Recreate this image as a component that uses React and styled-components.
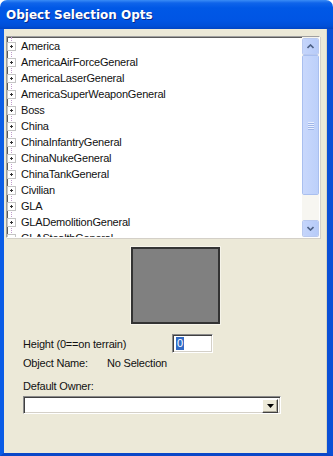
import React from "react";
import styled, { createGlobalStyle } from "styled-components";

const Global = createGlobalStyle`
  html, body { margin: 0; padding: 0; background: #fff; }
  body { width: 333px; height: 456px; overflow: hidden; }
`;

const Window = styled.div`
  width: 333px;
  height: 456px;
  display: flex;
  flex-direction: column;
  font-family: "Liberation Sans", Arial, sans-serif;
  font-size: 11px;
  letter-spacing: -0.2px;
  color: #111;
`;

const TitleBar = styled.div`
  height: 29px;
  flex: none;
  display: flex;
  align-items: center;
  padding-left: 6px;
  border-radius: 7px 7px 0 0;
  background: linear-gradient(
    to bottom,
    #3a8cf6 0px,
    #0f64ea 3px,
    #0058e6 8px,
    #0055e4 20px,
    #004fd8 26px,
    #0044c4 29px
  );
`;

const Title = styled.span`
  font-family: "DejaVu Sans", Verdana, sans-serif;
  font-weight: bold;
  font-size: 12px;
  letter-spacing: 0;
  color: #fff;
  text-shadow: 1px 1px 0 #0a2a8a;
`;

const Frame = styled.div`
  flex: 1;
  display: flex;
  flex-direction: column;
  background: #ece9d8;
  border-left: 4px solid #0a5ce6;
  border-right: 6px solid #0a4fd6;
  border-bottom: 3px solid #0a47c8;
  box-shadow: inset -1px 0 0 #d8d4c4;
`;

const TreeBox = styled.div`
  margin: 7px 0 0 2px;
  width: 314px;
  height: 202px;
  box-sizing: border-box;
  display: flex;
  background: #fff;
  border-top: 1px solid #a0a0a0;
  border-left: 1px solid #a0a0a0;
  border-right: 1px solid #ffffff;
  border-bottom: 1px solid #ffffff;
  box-shadow: inset 1px 1px 0 #5a5a5a, 1px 1px 0 #d4d0c8;
`;

const TreeList = styled.div`
  flex: 1;
  position: relative;
  overflow: hidden;
  padding-top: 1px;
`;

const DotLine = styled.div`
  position: absolute;
  left: 4px;
  top: 0;
  bottom: 0;
  border-left: 1px dotted #c09ccc;
`;

const TreeRow = styled.div`
  height: 16px;
  display: flex;
  align-items: center;
  position: relative;
`;

const Plus = styled.span`
  width: 9px;
  height: 9px;
  box-sizing: border-box;
  border: 1px solid #c4c4c4;
  background: #fff;
  position: relative;
  flex: none;
  &::before {
    content: "";
    position: absolute;
    left: 2px;
    top: 3px;
    width: 3px;
    height: 1px;
    background: #333;
  }
  &::after {
    content: "";
    position: absolute;
    left: 3px;
    top: 2px;
    width: 1px;
    height: 3px;
    background: #333;
  }
`;

const TreeLabel = styled.span`
  margin-left: 5px;
  white-space: nowrap;
`;

const ScrollBar = styled.div`
  width: 17px;
  flex: none;
  display: flex;
  flex-direction: column;
  background: #f5f4ee;
  padding-top: 1px;
`;

const ScrollBtn = styled.div`
  height: 17px;
  box-sizing: border-box;
  display: flex;
  align-items: center;
  justify-content: center;
  background: linear-gradient(to right, #c5d5fb, #b7cbf8);
  border: 1px solid #fff;
  border-radius: 2px;
  outline: 1px solid #b9c9ef;
  outline-offset: -1px;
`;

const Thumb = styled.div`
  height: 140px;
  box-sizing: border-box;
  display: flex;
  flex-direction: column;
  align-items: center;
  justify-content: center;
  gap: 1px;
  background: linear-gradient(to right, #c9d8fc, #bcd0fa);
  border: 1px solid #fff;
  outline: 1px solid #a9bfef;
  outline-offset: -1px;
  border-radius: 2px;
`;

const Grip = styled.span`
  width: 6px;
  height: 1px;
  background: #e8efff;
  box-shadow: 0 1px 0 #9fb6e8;
`;

const Track = styled.div`
  flex: 1;
  background: #f7f6f1;
`;

const Preview = styled.div`
  margin: 9px 0 0 127px;
  width: 89px;
  height: 77px;
  box-sizing: border-box;
  background: #808080;
  border: 2px solid #333;
  box-shadow: 0 0 0 1px #f6f4ea;
`;

const Form = styled.div`
  padding-left: 19px;
  display: flex;
  flex-direction: column;
`;

const Row = styled.div`
  display: flex;
  align-items: center;
  margin-top: ${(p) => p.$mt || 0}px;
  height: ${(p) => p.$h || 14}px;
`;

const Label = styled.span`
  width: ${(p) => p.$w}px;
  flex: none;
`;

const Sunken = styled.div`
  box-sizing: border-box;
  background: #fff;
  border-top: 1px solid #8a8a8a;
  border-left: 1px solid #8a8a8a;
  border-right: 1px solid #fff;
  border-bottom: 1px solid #fff;
  box-shadow: inset 1px 1px 0 #404040, inset -1px -1px 0 #d4d0c8;
`;

const Input = styled(Sunken)`
  width: 41px;
  height: 19px;
  padding: 2px 0 0 3px;
`;

const Selected = styled.span`
  display: inline-block;
  background: #316ac5;
  color: #fff;
  padding: 0 1px;
  line-height: 13px;
`;

const Combo = styled(Sunken)`
  width: 258px;
  height: 18px;
  display: flex;
  justify-content: flex-end;
  padding: 2px;
`;

const DropBtn = styled.div`
  width: 16px;
  height: 14px;
  box-sizing: border-box;
  background: #ece9d8;
  border-top: 1px solid #fff;
  border-left: 1px solid #fff;
  border-right: 1px solid #404040;
  border-bottom: 1px solid #404040;
  box-shadow: inset -1px -1px 0 #aca899;
  display: flex;
  align-items: center;
  justify-content: center;
`;

const items = [
  "America",
  "AmericaAirForceGeneral",
  "AmericaLaserGeneral",
  "AmericaSuperWeaponGeneral",
  "Boss",
  "China",
  "ChinaInfantryGeneral",
  "ChinaNukeGeneral",
  "ChinaTankGeneral",
  "Civilian",
  "GLA",
  "GLADemolitionGeneral",
  "GLAStealthGeneral",
];

export default function App() {
  return (
    <>
      <Global />
      <Window>
        <TitleBar>
          <Title>Object Selection Opts</Title>
        </TitleBar>
        <Frame>
          <TreeBox>
            <TreeList>
              <DotLine />
              {items.map((it) => (
                <TreeRow key={it}>
                  <Plus />
                  <TreeLabel>{it}</TreeLabel>
                </TreeRow>
              ))}
            </TreeList>
            <ScrollBar>
              <ScrollBtn>
                <svg width="7" height="5" viewBox="0 0 7 5">
                  <path d="M0.5 4 L3.5 1 L6.5 4" fill="none" stroke="#4d6185" strokeWidth="1.6" />
                </svg>
              </ScrollBtn>
              <Thumb>
                <Grip />
                <Grip />
                <Grip />
                <Grip />
              </Thumb>
              <Track />
              <ScrollBtn>
                <svg width="7" height="5" viewBox="0 0 7 5">
                  <path d="M0.5 1 L3.5 4 L6.5 1" fill="none" stroke="#4d6185" strokeWidth="1.6" />
                </svg>
              </ScrollBtn>
            </ScrollBar>
          </TreeBox>
          <Preview />
          <Form>
            <Row $mt={10} $h={19}>
              <Label $w={149}>Height (0==on terrain)</Label>
              <Input>
                <Selected>0</Selected>
              </Input>
            </Row>
            <Row $mt={3} $h={14}>
              <Label $w={84}>Object Name:</Label>
              <Label $w={120}>No Selection</Label>
            </Row>
            <Row $mt={9} $h={14}>
              <Label $w={120}>Default Owner:</Label>
            </Row>
            <Row $mt={3} $h={18}>
              <Combo>
                <DropBtn>
                  <svg width="7" height="4" viewBox="0 0 7 4">
                    <path d="M0 0 H7 L3.5 4 Z" fill="#000" />
                  </svg>
                </DropBtn>
              </Combo>
            </Row>
          </Form>
        </Frame>
      </Window>
    </>
  );
}
